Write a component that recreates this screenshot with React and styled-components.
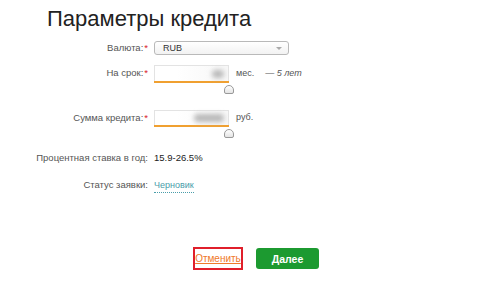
import React from 'react'
import styled, { createGlobalStyle } from 'styled-components'

const GlobalStyle = createGlobalStyle`
  html, body {
    margin: 0;
    padding: 0;
    background: #fff;
  }
  body {
    font-family: 'Liberation Sans', Arial, sans-serif;
    color: #333;
  }
`

const Page = styled.div`
  width: 500px;
  height: 291px;
  overflow: hidden;
`

const Title = styled.h1`
  margin: 6px 0 0 47px;
  font-size: 22px;
  line-height: 26px;
  font-weight: normal;
  color: #222;
`

const Form = styled.div`
  display: flex;
  flex-direction: column;
`

const Row = styled.div`
  display: grid;
  grid-template-columns: 148px auto;
  column-gap: 6px;
  align-items: start;
  margin-top: ${p => p.$mt}px;
`

const Label = styled.div`
  text-align: right;
  font-size: 9.5px;
  line-height: ${p => p.$lh || 14}px;
  color: #555;
  white-space: nowrap;
`

const Star = styled.span`
  color: #d9222a;
  margin-left: 1px;
`

const Select = styled.div`
  box-sizing: border-box;
  width: 135px;
  height: 14px;
  border: 1px solid #b9b9b9;
  border-radius: 3px;
  background: linear-gradient(#fff, #f2f2f2);
  display: flex;
  align-items: center;
  justify-content: space-between;
  padding: 0 6px 0 8px;
  font-size: 9px;
  color: #333;
`

const Arrow = styled.span`
  width: 0;
  height: 0;
  border-left: 3px solid transparent;
  border-right: 3px solid transparent;
  border-top: 3px solid #aaa;
`

const Control = styled.div`
  display: flex;
  align-items: flex-start;
`

const Slider = styled.div`
  width: 75px;
  display: flex;
  flex-direction: column;
`

const Input = styled.div`
  box-sizing: border-box;
  height: ${p => p.$h}px;
  border: 1px solid #e3e3e3;
  border-bottom: none;
  background: linear-gradient(90deg, #fff 30%, #f7f7f7);
  display: flex;
  align-items: center;
  justify-content: flex-end;
  padding-right: 4px;
`

const Blur = styled.span`
  width: ${p => p.$w}px;
  height: 8px;
  background: #b8b8b8;
  filter: blur(2.5px);
  border-radius: 4px;
`

const Track = styled.div`
  height: 2px;
  background: #f0a030;
`

const Handle = styled.div`
  align-self: flex-end;
  margin: 2px -5px 0 0;
  width: 10px;
  height: 9px;
  box-sizing: border-box;
  border: 1px solid #999;
  border-radius: 5px 5px 2px 2px;
  background: linear-gradient(#fff, #e4e4e4);
`

const Unit = styled.span`
  font-size: 9px;
  line-height: ${p => p.$lh || 16}px;
  color: #555;
  margin-left: 7px;
`

const Hint = styled.span`
  font-size: 9px;
  line-height: 16px;
  font-style: italic;
  color: #555;
  margin-left: 11px;
`

const Value = styled.div`
  font-size: 9.5px;
  line-height: 14px;
  color: #222;
`

const StatusLink = styled.a`
  font-size: 9px;
  line-height: 13px;
  margin-top: 1px;
  color: #4a9daa;
  text-decoration: none;
  border-bottom: 1px dotted #4a9daa;
  justify-self: start;
`

const Actions = styled.div`
  display: flex;
  align-items: center;
  gap: 13px;
  margin: 54px 0 0 193px;
`

const CancelBox = styled.div`
  box-sizing: border-box;
  width: 50px;
  height: 23px;
  border: 2px solid #e01f2b;
  display: flex;
  align-items: center;
  justify-content: center;
`

const CancelLink = styled.a`
  font-size: 10px;
  color: #f07a2a;
  text-decoration: underline;
`

const NextButton = styled.button`
  width: 63px;
  height: 21px;
  border: none;
  border-radius: 3px;
  background: #1c9a30;
  color: #fff;
  font-family: 'Liberation Sans', Arial, sans-serif;
  font-size: 10.5px;
  font-weight: bold;
  padding: 0;
`

const App = () => (
  <React.Fragment>
    <GlobalStyle />
    <Page>
      <Title>Параметры кредита</Title>
      <Form>
        <Row $mt={9}>
          <Label>Валюта:<Star>*</Star></Label>
          <Select>
            RUB
            <Arrow />
          </Select>
        </Row>
        <Row $mt={10}>
          <Label $lh={16}>На срок:<Star>*</Star></Label>
          <Control>
            <Slider>
              <Input $h={16}><Blur $w={12} /></Input>
              <Track />
              <Handle />
            </Slider>
            <Unit>мес.</Unit>
            <Hint>— 5 лет</Hint>
          </Control>
        </Row>
        <Row $mt={16}>
          <Label $lh={15}>Сумма кредита:<Star>*</Star></Label>
          <Control>
            <Slider>
              <Input $h={15}><Blur $w={30} /></Input>
              <Track />
              <Handle />
            </Slider>
            <Unit $lh={15}>руб.</Unit>
          </Control>
        </Row>
        <Row $mt={13}>
          <Label>Процентная ставка в год:</Label>
          <Value>15.9-26.5%</Value>
        </Row>
        <Row $mt={13}>
          <Label>Статус заявки:</Label>
          <StatusLink href="#">Черновик</StatusLink>
        </Row>
      </Form>
      <Actions>
        <CancelBox>
          <CancelLink href="#">Отменить</CancelLink>
        </CancelBox>
        <NextButton>Далее</NextButton>
      </Actions>
    </Page>
  </React.Fragment>
)

export default App
